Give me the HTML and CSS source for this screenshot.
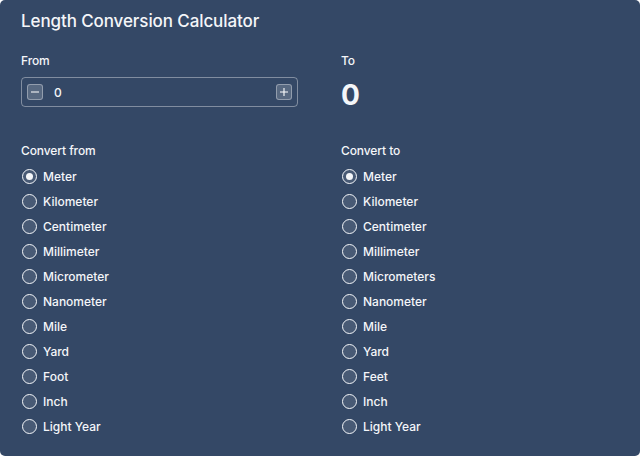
FILE: index.html
```html
<!DOCTYPE html>
<html lang="en">
<head>
<meta charset="utf-8">
<title>Length Conversion Calculator</title>
<link rel="stylesheet" href="styles.css">
</head>
<body>
<div class="panel">
  <h1 class="title">Length Conversion Calculator</h1>
  <div class="grid">
    <div class="cell">
      <div class="label">From</div>
      <div class="num-input">
        <span class="step-btn"><svg width="10" height="10" viewBox="0 0 10 10"><path d="M1 5h8" stroke="#fff" stroke-width="1.1"/></svg></span>
        <span class="num-value">0</span>
        <span class="step-btn"><svg width="10" height="10" viewBox="0 0 10 10"><path d="M1 5h8M5 1v8" stroke="#fff" stroke-width="1.1"/></svg></span>
      </div>
    </div>
    <div class="cell">
      <div class="label">To</div>
      <div class="result">0</div>
    </div>
    <div class="cell lower">
      <div class="label">Convert from</div>
      <ul class="radios">
        <li class="radio checked"><span class="dot"></span>Meter</li>
        <li class="radio"><span class="dot"></span>Kilometer</li>
        <li class="radio"><span class="dot"></span>Centimeter</li>
        <li class="radio"><span class="dot"></span>Millimeter</li>
        <li class="radio"><span class="dot"></span>Micrometer</li>
        <li class="radio"><span class="dot"></span>Nanometer</li>
        <li class="radio"><span class="dot"></span>Mile</li>
        <li class="radio"><span class="dot"></span>Yard</li>
        <li class="radio"><span class="dot"></span>Foot</li>
        <li class="radio"><span class="dot"></span>Inch</li>
        <li class="radio"><span class="dot"></span>Light Year</li>
      </ul>
    </div>
    <div class="cell lower">
      <div class="label">Convert to</div>
      <ul class="radios">
        <li class="radio checked"><span class="dot"></span>Meter</li>
        <li class="radio"><span class="dot"></span>Kilometer</li>
        <li class="radio"><span class="dot"></span>Centimeter</li>
        <li class="radio"><span class="dot"></span>Millimeter</li>
        <li class="radio"><span class="dot"></span>Micrometers</li>
        <li class="radio"><span class="dot"></span>Nanometer</li>
        <li class="radio"><span class="dot"></span>Mile</li>
        <li class="radio"><span class="dot"></span>Yard</li>
        <li class="radio"><span class="dot"></span>Feet</li>
        <li class="radio"><span class="dot"></span>Inch</li>
        <li class="radio"><span class="dot"></span>Light Year</li>
      </ul>
    </div>
  </div>
</div>
</body>
</html>
```
FILE: styles.css
```css
html, body {
  margin: 0;
  padding: 0;
  background: #ffffff;
}
body {
  font-family: Inter, "Noto Sans", "Liberation Sans", sans-serif;
  color: #f4f6f9;
}
.panel {
  width: 640px;
  height: 456px;
  box-sizing: border-box;
  background: #344866;
  border-radius: 5px;
  padding-top: 10px;
  overflow: hidden;
}
.title {
  margin: 0;
  padding-left: 21px;
  font-size: 17px;
  line-height: 22px;
  font-weight: 500;
  letter-spacing: -0.1px;
}
.grid {
  display: grid;
  grid-template-columns: 320px 320px;
  margin-top: 21px;
}
.cell {
  padding: 0 22px 0 21px;
}
.cell.lower {
  margin-top: 32px;
}
.label {
  font-size: 12px;
  line-height: 16px;
  font-weight: 500;
  letter-spacing: -0.1px;
}
.num-input {
  margin-top: 8px;
  height: 30px;
  box-sizing: border-box;
  border: 1px solid rgba(255, 255, 255, 0.38);
  border-radius: 4px;
  display: flex;
  align-items: center;
  padding: 0 5px;
}
.step-btn {
  width: 16px;
  height: 16px;
  box-sizing: border-box;
  border: 1px solid rgba(255, 255, 255, 0.35);
  background: rgba(255, 255, 255, 0.18);
  border-radius: 3px;
  display: flex;
  align-items: center;
  justify-content: center;
}
.num-value {
  flex: 1;
  margin-left: 11px;
  font-size: 12px;
  font-weight: 500;
}
.result {
  margin-top: 10px;
  font-size: 28px;
  line-height: 32px;
  font-weight: 700;
}
.radios {
  list-style: none;
  margin: 5px 0 0;
  padding: 0;
}
.radio {
  height: 25px;
  display: flex;
  align-items: center;
  font-size: 12px;
  font-weight: 500;
}
.dot {
  width: 15px;
  height: 15px;
  box-sizing: border-box;
  border: 1.6px solid #f4f6f9;
  border-radius: 50%;
  background: rgba(255, 255, 255, 0.1);
  margin-left: 1px;
  margin-right: 6px;
  position: relative;
}
.radio.checked .dot::after {
  content: "";
  position: absolute;
  left: 50%;
  top: 50%;
  width: 7px;
  height: 7px;
  margin: -3.5px 0 0 -3.5px;
  border-radius: 50%;
  background: #f4f6f9;
}
```
